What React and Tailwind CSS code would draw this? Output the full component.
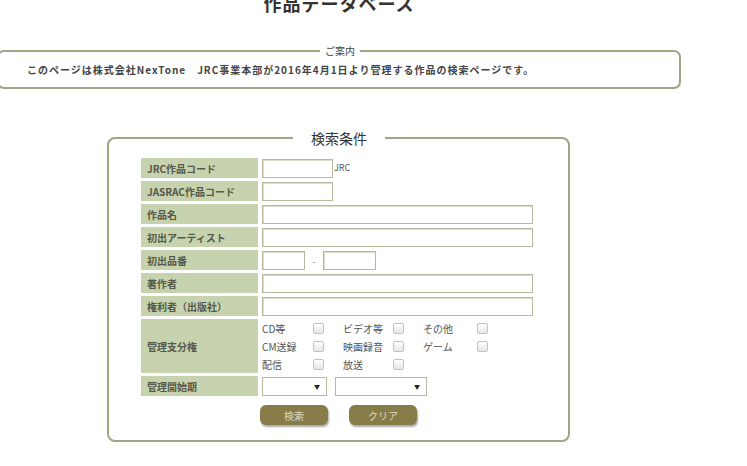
import React from 'react'

const Label = ({ children, tall }) => (
  <div className={`w-[117px] shrink-0 bg-[#c7d3ae] pl-[6px] flex items-center text-[10px] font-bold text-[#55584a] ${tall ? 'h-[54px]' : 'h-[20px]'}`}>
    {children}
  </div>
)

const TextBox = ({ w }) => (
  <div className={`h-[19px] ${w} bg-white border border-[#b7b99f] shadow-[inset_1px_1px_0_#dcdccc]`} />
)

const Check = ({ label, w }) => (
  <div className="flex items-center h-[18px]">
    <span className={`${w} text-[10px] text-[#555]`}>{label}</span>
    <span className="w-[11px] h-[11px] rounded-[2px] border border-[#c2c2c2] bg-gradient-to-b from-white to-[#e6e6e6]" />
  </div>
)

const Select = ({ w }) => (
  <div className={`h-[19px] ${w} bg-white border border-[#b7b99f] flex items-center justify-end pr-[6px]`}>
    <span className="text-[6px] text-[#222]">▼</span>
  </div>
)

const Row = ({ label, tall, children }) => (
  <div className="flex gap-[4px] items-center">
    <Label tall={tall}>{label}</Label>
    <div className="flex items-center">{children}</div>
  </div>
)

export default function App() {
  return (
    <div className="min-h-screen bg-white overflow-hidden font-['Noto_Sans_CJK_JP','Noto_Sans',sans-serif]">
      <div className="w-[684px] -ml-[3px]">
        <h1 className="-mt-[9px] text-center text-[18px] leading-[24px] font-bold tracking-[1px] text-[#333]">
          作品データベース
        </h1>

        <fieldset className="mt-[29px] border-2 border-[#a2a486] rounded-[7px]">
          <legend className="ml-[321px] px-[5px] text-[10px] leading-[14px] text-[#444]">ご案内</legend>
          <p className="pt-[5px] pb-[10px] pl-[28px] text-[10px] leading-[14px] tracking-[1px] font-bold text-[#444]">
            このページは株式会社NexTone　JRC事業本部が2016年4月1日より管理する作品の検索ページです。
          </p>
        </fieldset>

        <fieldset className="mt-[39px] ml-[110px] w-[463px] border-2 border-[#a2a486] rounded-[8px]">
          <legend className="ml-[184px] px-[18px] text-[14px] leading-[20px] text-[#333]">検索条件</legend>
          <div className="pt-[10px] pb-[15px] pl-[32px]">
            <div className="flex flex-col gap-[3px]">
              <Row label="JRC作品コード">
                <TextBox w="w-[71px]" />
                <span className="ml-[1px] text-[9px] text-[#555]">JRC</span>
              </Row>
              <Row label="JASRAC作品コード">
                <TextBox w="w-[71px]" />
              </Row>
              <Row label="作品名">
                <TextBox w="w-[271px]" />
              </Row>
              <Row label="初出アーティスト">
                <TextBox w="w-[271px]" />
              </Row>
              <Row label="初出品番">
                <TextBox w="w-[43px]" />
                <span className="w-[18px] text-center text-[10px] text-[#999]">-</span>
                <TextBox w="w-[53px]" />
              </Row>
              <Row label="著作者">
                <TextBox w="w-[271px]" />
              </Row>
              <Row label="権利者（出版社）">
                <TextBox w="w-[271px]" />
              </Row>
              <Row label="管理支分権" tall>
                <div className="flex flex-col">
                  <div className="flex">
                    <div className="w-[81px]"><Check label="CD等" w="w-[51px]" /></div>
                    <div className="w-[80px]"><Check label="ビデオ等" w="w-[50px]" /></div>
                    <div><Check label="その他" w="w-[54px]" /></div>
                  </div>
                  <div className="flex">
                    <div className="w-[81px]"><Check label="CM送録" w="w-[51px]" /></div>
                    <div className="w-[80px]"><Check label="映画録音" w="w-[50px]" /></div>
                    <div><Check label="ゲーム" w="w-[54px]" /></div>
                  </div>
                  <div className="flex">
                    <div className="w-[81px]"><Check label="配信" w="w-[51px]" /></div>
                    <div className="w-[80px]"><Check label="放送" w="w-[50px]" /></div>
                  </div>
                </div>
              </Row>
              <Row label="管理開始期">
                <Select w="w-[65px]" />
                <div className="w-[8px]" />
                <Select w="w-[92px]" />
              </Row>
            </div>
            <div className="mt-[9px] ml-[119px] flex gap-[21px]">
              <button className="w-[68px] h-[20px] rounded-[6px] bg-[#877b48] text-[10px] text-[#e0d9bd] shadow-[1px_2px_2px_rgba(0,0,0,0.35)]">
                検索
              </button>
              <button className="w-[68px] h-[20px] rounded-[6px] bg-[#877b48] text-[10px] text-[#e0d9bd] shadow-[1px_2px_2px_rgba(0,0,0,0.35)]">
                クリア
              </button>
            </div>
          </div>
        </fieldset>
      </div>
    </div>
  )
}
